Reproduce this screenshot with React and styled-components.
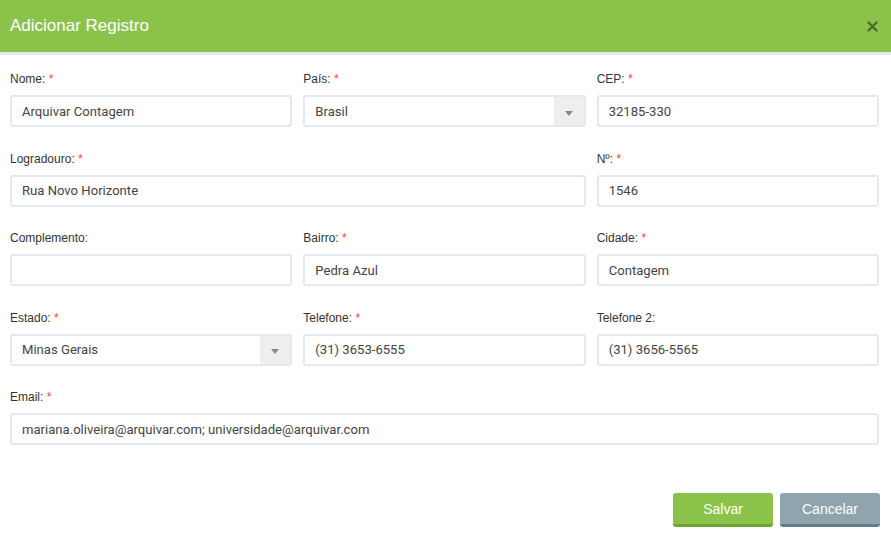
import React from "react";
import styled, { createGlobalStyle } from "styled-components";

const GlobalStyle = createGlobalStyle`
  html, body {
    margin: 0;
    padding: 0;
    background: #ffffff;
    font-family: "Liberation Sans", Arial, sans-serif;
  }
  * { box-sizing: border-box; }
`;

const Modal = styled.div`
  width: 891px;
  height: 539px;
  background: #fff;
  display: flex;
  flex-direction: column;
`;

const Header = styled.div`
  height: 55px;
  background: #8bc34a;
  border-bottom: 3px solid #e2e5e8;
  display: flex;
  align-items: center;
  justify-content: space-between;
  padding: 0 12px 0 10px;
  h1 {
    margin: 0;
    font-size: 17px;
    font-weight: normal;
    color: #fff;
  }
`;

const CloseBtn = styled.button`
  border: none;
  background: none;
  padding: 0;
  width: 14px;
  height: 14px;
  display: flex;
  align-items: center;
  justify-content: center;
  cursor: pointer;
`;

const Body = styled.div`
  padding: 17px 12px 0 10px;
  display: grid;
  grid-template-columns: repeat(3, 1fr);
  column-gap: 11px;
  row-gap: 24.5px;
`;

const Field = styled.div`
  display: flex;
  flex-direction: column;
  grid-column: span ${(p) => p.$span || 1};
`;

const Label = styled.label`
  font-size: 12px;
  line-height: 14px;
  color: #333;
  margin-bottom: 9px;
  span {
    color: #f44336;
  }
`;

const InputWrap = styled.div`
  height: 32px;
  border: 2px solid #e5e8ec;
  border-radius: 3px;
  background: #fff;
  display: flex;
  align-items: center;
  overflow: hidden;
`;

const Input = styled.input`
  flex: 1;
  height: 100%;
  border: none;
  outline: none;
  padding: 0 10px;
  font-family: Roboto, "Liberation Sans", sans-serif;
  font-size: 13.1px;
  color: #444;
  background: transparent;
`;

const Arrow = styled.div`
  width: 30px;
  height: 100%;
  background: #eeeeee;
  display: flex;
  align-items: center;
  justify-content: center;
  padding-top: 4px;
  &::after {
    content: "";
    border-left: 4px solid transparent;
    border-right: 4px solid transparent;
    border-top: 5px solid #888;
  }
`;

const Footer = styled.div`
  display: flex;
  justify-content: flex-end;
  gap: 7px;
  padding: 48px 11px 0 0;
`;

const Button = styled.button`
  width: 100px;
  height: 34px;
  border: none;
  border-radius: 3px;
  border-bottom: 3px solid ${(p) => (p.$variant === "cancel" ? "#607d8b" : "#6da534")};
  background: ${(p) => (p.$variant === "cancel" ? "#90a4ae" : "#8bc34a")};
  color: #fff;
  font-family: "Liberation Sans", Arial, sans-serif;
  font-size: 14px;
  padding-top: 2px;
  cursor: pointer;
`;

const fields = [
  { label: "Nome:", req: true, value: "Arquivar Contagem" },
  { label: "País:", req: true, value: "Brasil", select: true },
  { label: "CEP:", req: true, value: "32185-330" },
  { label: "Logradouro:", req: true, value: "Rua Novo Horizonte", span: 2 },
  { label: "Nº:", req: true, value: "1546" },
  { label: "Complemento:", req: false, value: "" },
  { label: "Bairro:", req: true, value: "Pedra Azul" },
  { label: "Cidade:", req: true, value: "Contagem" },
  { label: "Estado:", req: true, value: "Minas Gerais", select: true },
  { label: "Telefone:", req: true, value: "(31) 3653-6555" },
  { label: "Telefone 2:", req: false, value: "(31) 3656-5565" },
  {
    label: "Email:",
    req: true,
    value: "mariana.oliveira@arquivar.com; universidade@arquivar.com",
    span: 3,
  },
];

export default function App() {
  return (
    <>
      <GlobalStyle />
      <Modal>
        <Header>
          <h1>Adicionar Registro</h1>
          <CloseBtn>
            <svg width="11" height="11" viewBox="0 0 11 11">
              <path d="M1.5 1.5 L9.5 9.5 M9.5 1.5 L1.5 9.5" stroke="#4a6b2a" strokeWidth="2.4" strokeLinecap="round" />
            </svg>
          </CloseBtn>
        </Header>
        <Body>
          {fields.map((f) => (
            <Field key={f.label} $span={f.span}>
              <Label>
                {f.label} {f.req && <span>*</span>}
              </Label>
              <InputWrap>
                <Input defaultValue={f.value} readOnly={f.select} />
                {f.select && <Arrow />}
              </InputWrap>
            </Field>
          ))}
        </Body>
        <Footer>
          <Button>Salvar</Button>
          <Button $variant="cancel">Cancelar</Button>
        </Footer>
      </Modal>
    </>
  );
}
